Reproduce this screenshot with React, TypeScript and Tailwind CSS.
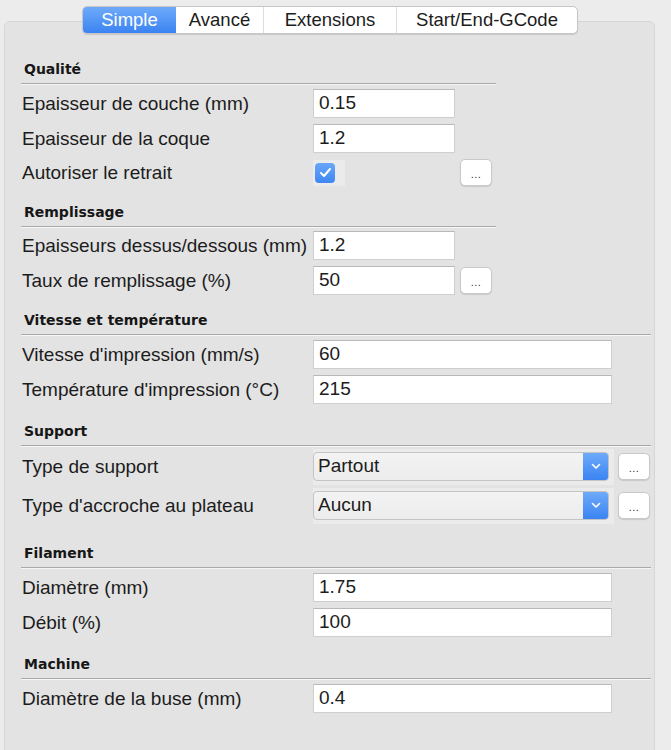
import React from "react";

function Header({ title, cls, wide }: { title: string; cls: string; wide: boolean }) {
  return (
    <div
      className={`${cls} pb-[5px] pl-[3px] border-b border-[#a9a9a9] shadow-[0_1px_0_#f6f6f6] ${wide ? "w-[630px]" : "w-[475px]"}`}
    >
      <div className="font-['DejaVu_Sans',sans-serif] font-bold text-[14px] leading-[18px] text-[#161616]">
        {title}
      </div>
    </div>
  );
}

function Dots({ cls }: { cls: string }) {
  return (
    <div
      className={`${cls} w-[32px] h-[27px] bg-white rounded-[5px] border border-[#c9c9c9] shadow-[0_1px_1px_rgba(0,0,0,0.12)] flex items-center justify-center`}
    >
      <span className="text-[11px] leading-none text-[#333] pt-[3px] tracking-[0.5px]">...</span>
    </div>
  );
}

function Label({ text }: { text: string }) {
  return <div className="w-[292px] pl-[1px] text-[19px] leading-[22px] text-[#1c1c1c] whitespace-nowrap">{text}</div>;
}

function InputRow({ label, value, wide, dots }: { label: string; value: string; wide: boolean; dots?: boolean }) {
  return (
    <div className="flex items-center h-[35px]">
      <Label text={label} />
      <div
        className={`${wide ? "w-[299px]" : "w-[142px]"} h-[29px] bg-white border border-[#cfcfcf] border-t-[#b9b9b9] pl-[5px] flex items-center text-[19px] text-[#1c1c1c]`}
      >
        {value}
      </div>
      {dots && <Dots cls="ml-[5px]" />}
    </div>
  );
}

function SelectRow({ label, value }: { label: string; value: string }) {
  return (
    <div className="flex items-center h-[39px]">
      <Label text={label} />
      <div className="w-[301px] h-[36px] bg-[#ebebeb] flex items-center">
        <div className="w-[296px] h-[29px] rounded-[4px] border border-[#c4c4c4] bg-linear-to-b from-[#f3f3f3] to-[#ececec] flex overflow-hidden">
          <div className="flex-1 pl-[4px] flex items-center text-[19px] text-[#1c1c1c]">{value}</div>
          <div className="w-[25px] h-full bg-linear-to-b from-[#6eaaf9] to-[#3a83f2] flex items-center justify-center">
            <svg width="10" height="7" viewBox="0 0 10 7" fill="none">
              <path d="M1.5 1.5 L5 5 L8.5 1.5" stroke="white" strokeWidth="1.6" strokeLinecap="round" strokeLinejoin="round" />
            </svg>
          </div>
        </div>
      </div>
      <Dots cls="ml-[4px]" />
    </div>
  );
}

export default function App() {
  const tabs = [
    { t: "Simple", w: "w-[93px]", active: true },
    { t: "Avancé", w: "w-[87px]", active: false },
    { t: "Extensions", w: "w-[133px]", active: false },
    { t: "Start/End-GCode", w: "w-[181px]", active: false },
  ];
  return (
    <div className="min-h-[750px] h-[750px] overflow-hidden bg-[#ececec] font-['Liberation_Sans',Arial,sans-serif] pt-[6px]">
      <div className="relative z-10 pl-[82px] flex">
        <div className="flex h-[28px] rounded-[5px] border border-[#c6c6c6] bg-white shadow-[0_1px_1px_rgba(0,0,0,0.12)] overflow-hidden">
          {tabs.map((tab, i) => (
            <div
              key={tab.t}
              className={`${tab.w} h-full flex items-center justify-center text-[18.5px] ${
                tab.active
                  ? "bg-linear-to-b from-[#6eaaf9] to-[#3a83f2] text-white"
                  : "text-[#1c1c1c]"
              } ${i > 1 ? "border-l border-[#dedede]" : ""}`}
            >
              {tab.t}
            </div>
          ))}
        </div>
      </div>
      <div className="-mt-[13px] ml-[4px] w-[651px] h-[760px] rounded-[6px] border border-[#d6d6d6] bg-[#e3e3e3] pt-[26px] pl-[16px]">
        <Header title="Qualité" cls="pt-[12px]" wide={false} />
        <div className="mt-[2px]">
          <InputRow label="Epaisseur de couche (mm)" value="0.15" wide={false} />
          <InputRow label="Epaisseur de la coque" value="1.2" wide={false} />
          <div className="flex items-center h-[33px]">
            <Label text="Autoriser le retrait" />
            <div className="w-[142px] flex items-center">
              <div className="w-[32px] h-[26px] bg-[#ebebeb] flex items-center pl-[2px]">
                <div className="w-[20px] h-[20px] rounded-[4px] bg-linear-to-b from-[#6aa7f9] to-[#3f86f3] flex items-center justify-center">
                  <svg width="13" height="11" viewBox="0 0 13 11" fill="none">
                    <path d="M2 6 L5 9 L11 2" stroke="white" strokeWidth="2" strokeLinecap="round" strokeLinejoin="round" />
                  </svg>
                </div>
              </div>
            </div>
            <Dots cls="ml-[5px]" />
          </div>
        </div>

        <Header title="Remplissage" cls="pt-[14px]" wide={false} />
        <div className="mt-[1px]">
          <InputRow label="Epaisseurs dessus/dessous (mm)" value="1.2" wide={false} />
          <InputRow label="Taux de remplissage (%)" value="50" wide={false} dots />
        </div>

        <Header title="Vitesse et température" cls="pt-[13px]" wide />
        <div className="mt-[2px]">
          <InputRow label="Vitesse d'impression (mm/s)" value="60" wide />
          <InputRow label="Température d'impression (°C)" value="215" wide />
        </div>

        <Header title="Support" cls="pt-[15px]" wide />
        <div className="mt-[1px]">
          <SelectRow label="Type de support" value="Partout" />
          <SelectRow label="Type d'accroche au plateau" value="Aucun" />
        </div>

        <Header title="Filament" cls="pt-[19px]" wide />
        <div className="mt-[2px]">
          <InputRow label="Diamètre (mm)" value="1.75" wide />
          <InputRow label="Débit (%)" value="100" wide />
        </div>

        <Header title="Machine" cls="pt-[15px]" wide />
        <div className="mt-[2px]">
          <InputRow label="Diamètre de la buse (mm)" value="0.4" wide />
        </div>
      </div>
    </div>
  );
}
